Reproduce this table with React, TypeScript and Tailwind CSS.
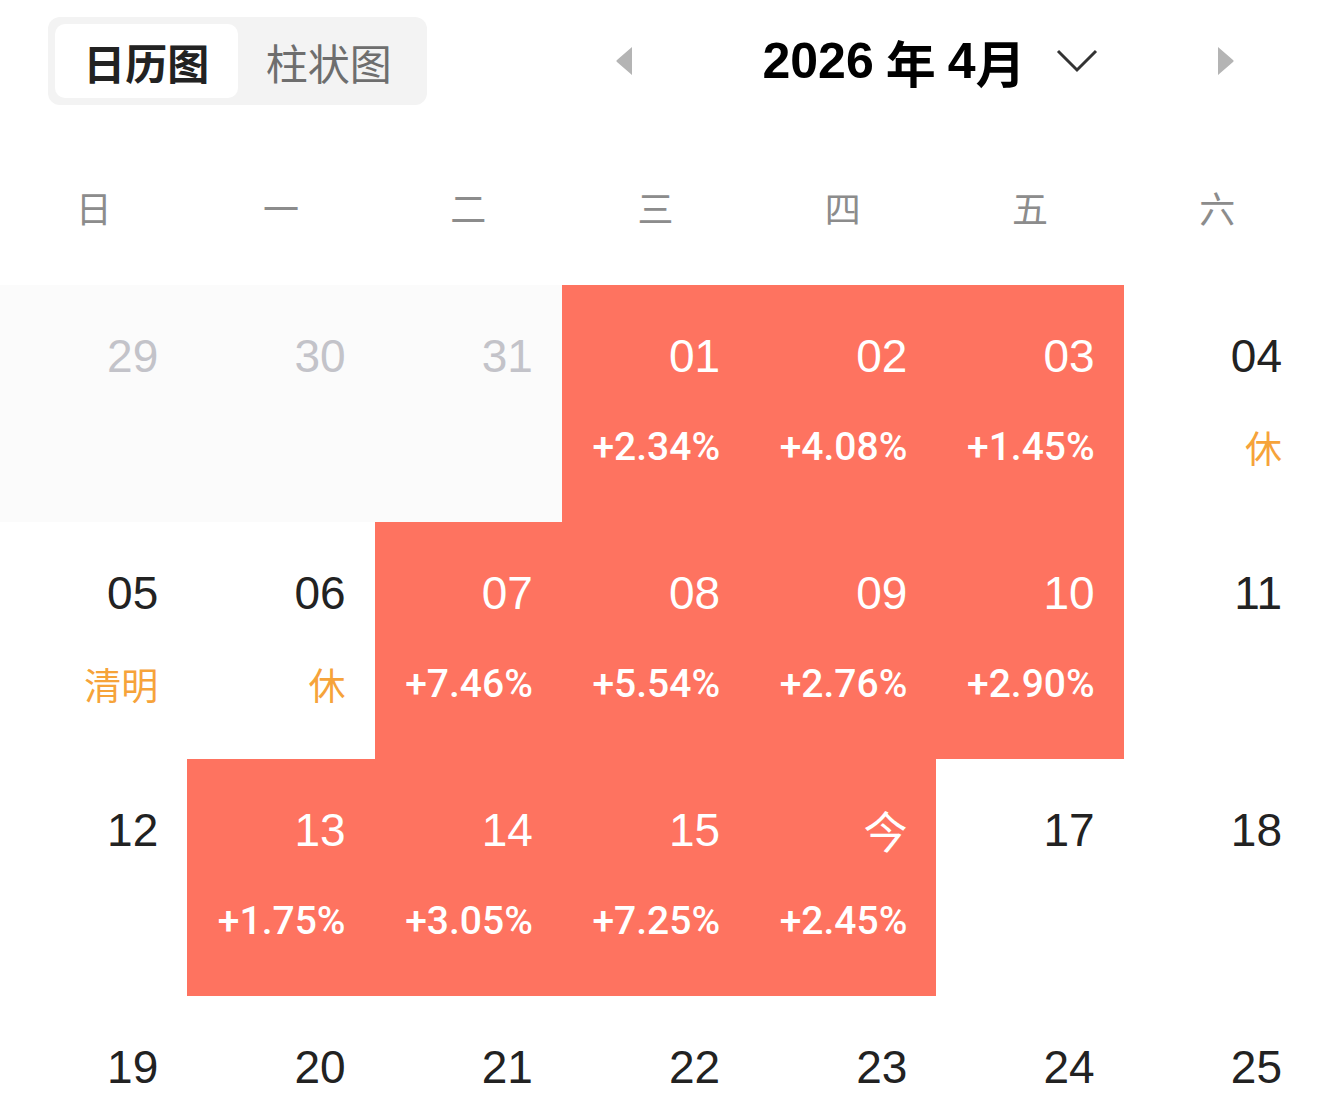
import React from "react";

type Cell = {
    day: string;
    muted?: boolean;
    red?: boolean;
    pct?: string;
    tag?: string;
    prev?: boolean;
};

const weeks: Cell[][] = [
    [
        { day: "29", muted: true, prev: true },
        { day: "30", muted: true, prev: true },
        { day: "31", muted: true, prev: true },
        { day: "01", red: true, pct: "+2.34%" },
        { day: "02", red: true, pct: "+4.08%" },
        { day: "03", red: true, pct: "+1.45%" },
        { day: "04", tag: "休" },
    ],
    [
        { day: "05", tag: "清明" },
        { day: "06", tag: "休" },
        { day: "07", red: true, pct: "+7.46%" },
        { day: "08", red: true, pct: "+5.54%" },
        { day: "09", red: true, pct: "+2.76%" },
        { day: "10", red: true, pct: "+2.90%" },
        { day: "11" },
    ],
    [
        { day: "12" },
        { day: "13", red: true, pct: "+1.75%" },
        { day: "14", red: true, pct: "+3.05%" },
        { day: "15", red: true, pct: "+7.25%" },
        { day: "今", red: true, pct: "+2.45%" },
        { day: "17" },
        { day: "18" },
    ],
    [
        { day: "19" },
        { day: "20" },
        { day: "21" },
        { day: "22" },
        { day: "23" },
        { day: "24" },
        { day: "25" },
    ],
];

const weekdays = ["日", "一", "二", "三", "四", "五", "六"];

const sans = "font-['Liberation_Sans','Noto_Sans_CJK_SC',sans-serif]";
const cjk = "font-['Noto_Sans_CJK_SC',sans-serif]";

const DayCell = ({ cell }: { cell: Cell }) => {
    const bg = cell.red ? "bg-[#fe7360]" : cell.prev ? "bg-[#fbfbfb]" : "bg-white";
    const numColor = cell.red ? "text-white" : cell.muted ? "text-[#c3c3c9]" : "text-[#222222]";
    const isChar = cell.day === "今";

    return (
        <div className={`h-[237px] flex flex-col items-end pr-[29px] ${bg}`}>
            {/* day number */}
            <div
                className={`mt-[48px] h-[46px] leading-none flex items-center ${numColor} ${
                    isChar ? `${cjk} text-[44px]` : `${sans} text-[46px]`
                }`}
            >
                {cell.day}
            </div>

            {/* second line: percent or holiday tag */}
            <div className="mt-[48px] h-[40px] flex items-center">
                {cell.pct && (
                    <span className="font-['Roboto',sans-serif] font-medium text-[39px] leading-none text-white">
                        {cell.pct}
                    </span>
                )}
                {cell.tag && (
                    <span className={`${cjk} text-[37px] leading-none text-[#f6a33a]`}>{cell.tag}</span>
                )}
            </div>
        </div>
    );
};

const App = () => {
    return (
        <div className="w-[1320px] h-[1112px] overflow-hidden bg-white">
            {/* Header */}
            <div className="flex items-center pt-[17px]">
                <div className="ml-[48px] w-[379px] h-[88px] rounded-[12px] bg-[#f3f3f3] p-[7px] flex">
                    <div className={`w-[183px] h-full rounded-[10px] bg-white flex items-center justify-center ${cjk} font-bold text-[42px] text-[#222222]`}>
                        日历图
                    </div>
                    <div className={`w-[183px] h-full flex items-center justify-center ${cjk} text-[42px] text-[#6e6e6e]`}>
                        柱状图
                    </div>
                </div>

                <div className="ml-[187px] w-[622px] flex items-center justify-between">
                    <svg width="20" height="32" viewBox="0 0 20 32">
                        <path d="M18 2 L3 15 Q1.5 16 3 17 L18 30 Z" fill="#b4b4b4" />
                    </svg>

                    <div className="flex items-center gap-[30px] ml-[10px]">
                        <div className={`${sans} font-bold text-[50px] leading-none text-black flex items-center gap-[12px]`}>
                            <span>2026</span>
                            <span className={cjk}>年</span>
                            <span className="flex items-center">
                                4<span className={cjk}>月</span>
                            </span>
                        </div>
                        <svg width="42" height="26" viewBox="0 0 42 26">
                            <path d="M2 3 L21 22 L40 3" fill="none" stroke="#333" strokeWidth="3" />
                        </svg>
                    </div>

                    <svg width="20" height="32" viewBox="0 0 20 32">
                        <path d="M2 2 L17 15 Q18.5 16 17 17 L2 30 Z" fill="#b4b4b4" />
                    </svg>
                </div>
            </div>

            {/* Weekdays */}
            <div className="w-[1311px] grid grid-cols-7 pt-[84px] pb-[60px]">
                {weekdays.map((w) => (
                    <div key={w} className={`text-center ${cjk} text-[36px] leading-none text-[#8c8c8c]`}>
                        {w}
                    </div>
                ))}
            </div>

            {/* Calendar grid */}
            <div className="w-[1311px] grid grid-cols-7">
                {weeks.flat().map((c, i) => (
                    <DayCell key={i} cell={c} />
                ))}
            </div>
        </div>
    );
};

export default App;
